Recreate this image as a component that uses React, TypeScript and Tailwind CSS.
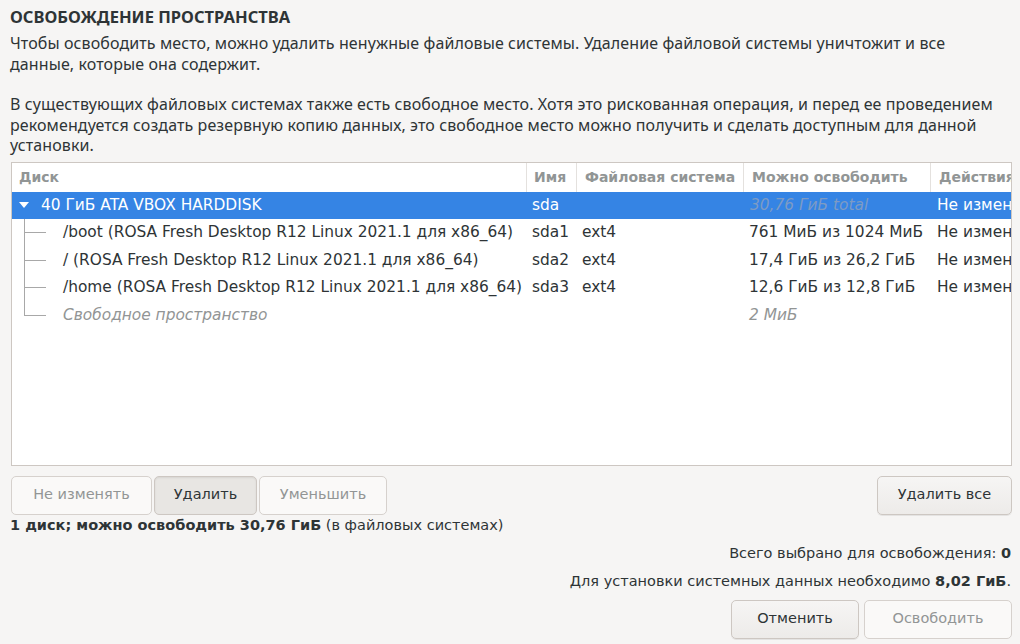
const body = '"DejaVu Sans", Verdana, sans-serif'

type Row = {
  name: string
  dev: string
  fs: string
  free: string
  action: string
  muted?: boolean
  last?: boolean
}

const ROWS: Row[] = [
  { name: '/boot (ROSA Fresh Desktop R12 Linux 2021.1 для x86_64)', dev: 'sda1', fs: 'ext4', free: '761 МиБ из 1024 МиБ', action: 'Не изменять' },
  { name: '/ (ROSA Fresh Desktop R12 Linux 2021.1 для x86_64)', dev: 'sda2', fs: 'ext4', free: '17,4 ГиБ из 26,2 ГиБ', action: 'Не изменять' },
  { name: '/home (ROSA Fresh Desktop R12 Linux 2021.1 для x86_64)', dev: 'sda3', fs: 'ext4', free: '12,6 ГиБ из 12,8 ГиБ', action: 'Не изменять' },
  { name: 'Свободное пространство', dev: '', fs: '', free: '2 МиБ', action: '', muted: true, last: true },
]

const COLS = 'grid grid-cols-[515px_50px_167px_187px_120px]'

function Btn({ label, w, disabled, active }: { label: string; w: string; disabled?: boolean; active?: boolean }) {
  return (
    <button
      className={
        'h-[39px] rounded-[5px] border text-[14.5px] ' +
        w +
        (disabled
          ? ' border-[#d6d1cd] bg-[#faf9f8] text-[#929595]'
          : active
            ? ' border-[#cdc7c2] bg-[#e8e6e3] text-[#2e3436] shadow-[inset_0_1px_2px_rgba(0,0,0,0.08)]'
            : ' border-[#cdc7c2] bg-gradient-to-b from-[#f6f5f4] to-[#edebe9] text-[#2e3436] shadow-[0_1px_0_rgba(0,0,0,0.07)]')
      }
      style={{ fontFamily: body }}
    >
      {label}
    </button>
  )
}

export default function App() {
  return (
    <div className="w-[1020px] h-[644px] overflow-hidden bg-[#f6f5f4] text-[#2e3436] px-[10px] pt-[6px]" style={{ fontFamily: body }}>
      <h1 className="font-bold text-[16.5px] leading-[22px]" style={{ fontFamily: '"Noto Sans", sans-serif' }}>
        ОСВОБОЖДЕНИЕ ПРОСТРАНСТВА
      </h1>

      <div className="mt-[5px] text-[16px] leading-[20.5px] tracking-[0.1px] text-[#2e3436]" style={{ fontFamily: '"Noto Sans", sans-serif' }}>
        <p>
          Чтобы освободить место, можно удалить ненужные файловые системы. Удаление файловой системы уничтожит и все
          <br />
          данные, которые она содержит.
        </p>
        <p className="mt-[20px]">
          В существующих файловых системах также есть свободное место. Хотя это рискованная операция, и перед ее проведением
          <br />
          рекомендуется создать резервную копию данных, это свободное место можно получить и сделать доступным для данной
          <br />
          установки.
        </p>
      </div>

      {/* дерево дисков */}
      <div className="mt-[6px] ml-[1px] w-[1001px] h-[304px] border border-[#cdc7c2] bg-white overflow-hidden text-[15.4px]">
        <div className={COLS + ' h-[29px] items-center text-[#919595] font-bold text-[14px]'}>
          <div className="pl-[7px] h-full flex items-center border-r border-[#e4e1de]">Диск</div>
          <div className="pl-[7px] h-full flex items-center border-r border-[#e4e1de]">Имя</div>
          <div className="pl-[8px] h-full flex items-center border-r border-[#e4e1de]">Файловая система</div>
          <div className="pl-[8px] h-full flex items-center border-r border-[#e4e1de]">Можно освободить</div>
          <div className="pl-[8px] h-full flex items-center whitespace-nowrap">Действия</div>
        </div>

        <div className={COLS + ' h-[27.5px] items-center bg-[#3584e4] text-white'}>
          <div className="flex items-center pl-[6px] whitespace-nowrap">
            <svg width="12" height="8" viewBox="0 0 12 8" className="mr-[11px]">
              <path d="M1 1h10L6 7z" fill="#ffffff" />
            </svg>
            <span>40 ГиБ ATA VBOX HARDDISK</span>
          </div>
          <div className="pl-[5px]">sda</div>
          <div />
          <div className="pl-[6px] italic text-[#7d9bc4] whitespace-nowrap">30,76 ГиБ total</div>
          <div className="pl-[6px] whitespace-nowrap">Не изменять</div>
        </div>

        {ROWS.map((r) => (
          <div key={r.name} className={COLS + ' h-[27.5px] items-center'}>
            <div className="flex items-center h-full whitespace-nowrap">
              <div className="relative w-[51px] h-full shrink-0">
                <span className={'absolute left-[12px] top-0 w-px bg-[#a8a8a8] ' + (r.last ? 'h-[14px]' : 'h-full')} />
                <span className="absolute left-[12px] top-[13px] w-[22px] h-px bg-[#a8a8a8]" />
              </div>
              <span className={r.muted ? 'italic text-[#929595]' : ''}>{r.name}</span>
            </div>
            <div className="pl-[5px]">{r.dev}</div>
            <div className="pl-[5px]">{r.fs}</div>
            <div className={'pl-[5px] whitespace-nowrap ' + (r.muted ? 'italic text-[#929595]' : '')}>{r.free}</div>
            <div className="pl-[6px] whitespace-nowrap">{r.action}</div>
          </div>
        ))}
      </div>

      <div className="mt-[10px] ml-[1px] w-[1001px] flex items-center">
        <div className="flex gap-[2px]">
          <Btn label="Не изменять" w="w-[141px]" disabled />
          <Btn label="Удалить" w="w-[103px]" active />
          <Btn label="Уменьшить" w="w-[128px]" disabled />
        </div>
        <div className="ml-auto">
          <Btn label="Удалить все" w="w-[135px]" />
        </div>
      </div>

      <p className="text-[14.5px] leading-[20px]">
        <b>1 диск; можно освободить 30,76 ГиБ</b> (в файловых системах)
      </p>

      <div className="w-[1001px] text-right text-[14.5px] leading-[20px]">
        <p className="mt-[8px]">
          Всего выбрано для освобождения: <b>0</b>
        </p>
        <p className="mt-[8px]">
          Для установки системных данных необходимо <b>8,02 ГиБ</b>.
        </p>
      </div>

      <div className="mt-[9px] w-[1002px] flex justify-end gap-[5px]">
        <Btn label="Отменить" w="w-[128px]" />
        <Btn label="Освободить" w="w-[148px]" disabled />
      </div>
    </div>
  )
}
